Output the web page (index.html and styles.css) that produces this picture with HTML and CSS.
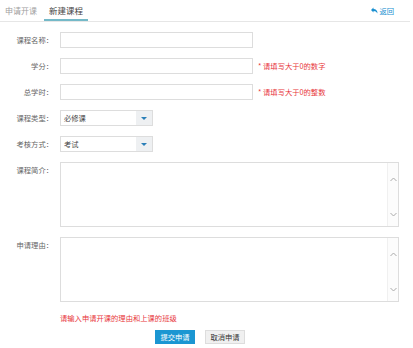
FILE: index.html
```html
<!DOCTYPE html>
<html lang="zh-CN">
<head>
    <meta charset="UTF-8">
    <title>新建课程</title>
    <link rel="stylesheet" href="styles.css">
</head>
<body>
    <div class="tabs">
        <span class="tab">申请开课</span>
        <span class="tab active">新建课程</span>
        <a class="back" href="#">
            <svg width="8" height="7" viewBox="0 0 8 7"><path d="M1 3 L3.5 0.5 L3.5 2 C6 2 7.5 3.5 7.5 6.5 C6.5 4.8 5.3 4 3.5 4 L3.5 5.5 Z" fill="#1a8fd0"/></svg>
            返回
        </a>
    </div>

    <div class="form">
        <div class="row">
            <label>课程名称：</label>
            <input type="text" class="text">
        </div>
        <div class="row">
            <label>学分：</label>
            <input type="text" class="text">
            <span class="err">* 请填写大于0的数字</span>
        </div>
        <div class="row">
            <label>总学时：</label>
            <input type="text" class="text">
            <span class="err">* 请填写大于0的整数</span>
        </div>
        <div class="row">
            <label>课程类型：</label>
            <div class="select">
                <span class="val">必修课</span>
                <span class="arrow"></span>
            </div>
        </div>
        <div class="row">
            <label>考核方式：</label>
            <div class="select">
                <span class="val">考试</span>
                <span class="arrow"></span>
            </div>
        </div>
        <div class="row top">
            <label>课程简介：</label>
            <div class="area">
                <textarea></textarea>
                <div class="bar">
                    <svg width="7" height="5" viewBox="0 0 7 5"><path d="M0.5 4 L3.5 1 L6.5 4" fill="none" stroke="#aaa"/></svg>
                    <svg width="7" height="5" viewBox="0 0 7 5"><path d="M0.5 1 L3.5 4 L6.5 1" fill="none" stroke="#aaa"/></svg>
                </div>
            </div>
        </div>
        <div class="row top">
            <label>申请理由：</label>
            <div class="area">
                <textarea></textarea>
                <div class="bar">
                    <svg width="7" height="5" viewBox="0 0 7 5"><path d="M0.5 4 L3.5 1 L6.5 4" fill="none" stroke="#aaa"/></svg>
                    <svg width="7" height="5" viewBox="0 0 7 5"><path d="M0.5 1 L3.5 4 L6.5 1" fill="none" stroke="#aaa"/></svg>
                </div>
            </div>
        </div>
        <div class="hint">请输入申请开课的理由和上课的班级</div>
        <div class="buttons">
            <button class="btn primary">提交申请</button>
            <button class="btn">取消申请</button>
        </div>
    </div>
</body>
</html>
```

FILE: styles.css
```css
body {
    margin: 0;
    width: 413px;
    font-family: "Noto Sans CJK SC", "Noto Sans", sans-serif;
    font-size: 7.3px;
    color: #666;
    background: #fff;
}
.tabs {
    display: flex;
    align-items: center;
    height: 21px;
    width: 410px;
    border-bottom: 1px solid #e6e6e6;
}
.tab {
    height: 21px;
    line-height: 21px;
    padding: 0 5px;
    margin-right: 2px;
    font-size: 8px;
    color: #a0a0a0;
    box-sizing: border-box;
}
.tab.active {
    color: #444;
    font-size: 8.5px;
    border-bottom: 2px solid #74b9c8;
    line-height: 20px;
}
.back {
    margin-left: auto;
    margin-right: 16px;
    color: #1a8fd0;
    text-decoration: none;
    font-size: 7.3px;
    display: flex;
    align-items: center;
    gap: 1px;
}
.form {
    padding-top: 10px;
}
.row {
    display: flex;
    align-items: center;
    margin-bottom: 10px;
}
.row.top {
    align-items: flex-start;
}
.row label {
    width: 55px;
    text-align: right;
    padding-right: 2px;
    box-sizing: border-box;
}
.row.top label {
    padding-top: 3px;
}
.text {
    width: 193px;
    height: 16px;
    border: 1px solid #ddd;
    box-sizing: border-box;
    margin: 0 0 0 5px;
    padding: 0 4px;
}
.err {
    color: #e8383d;
    margin-left: 5px;
}
.select {
    width: 93px;
    height: 16px;
    margin-left: 5px;
    border: 1px solid #ddd;
    box-sizing: border-box;
    display: flex;
    color: #444;
}
.val {
    flex: 1;
    line-height: 14px;
    padding-left: 3px;
}
.arrow {
    width: 16px;
    background: #eef0f2;
    display: flex;
    align-items: center;
    justify-content: center;
}
.arrow::after {
    content: "";
    border-left: 3px solid transparent;
    border-right: 3px solid transparent;
    border-top: 3px solid #2a7fb8;
}
.area {
    margin-left: 5px;
    width: 339px;
    height: 65px;
    border: 1px solid #ddd;
    box-sizing: border-box;
    display: flex;
}
.area textarea {
    flex: 1;
    border: none;
    resize: none;
    outline: none;
    padding: 0;
}
.bar {
    width: 10px;
    border-left: 1px solid #f0f0f0;
    background: #fcfcfc;
    display: flex;
    flex-direction: column;
    justify-content: space-between;
    align-items: center;
    padding: 14px 0 9px;
}
.hint {
    color: #e8383d;
    margin: 0 0 0 60px;
    height: 12px;
    line-height: 12px;
}
.buttons {
    display: flex;
    justify-content: center;
    gap: 10px;
    margin-top: 6px;
    padding-right: 13px;
}
.btn {
    width: 40px;
    height: 14px;
    padding: 0;
    font-family: inherit;
    font-size: 7.3px;
    border: 1px solid #ddd;
    background: #f0f0f0;
    color: #333;
}
.btn.primary {
    background: #1b96d2;
    border-color: #1b96d2;
    color: #fff;
}
```
